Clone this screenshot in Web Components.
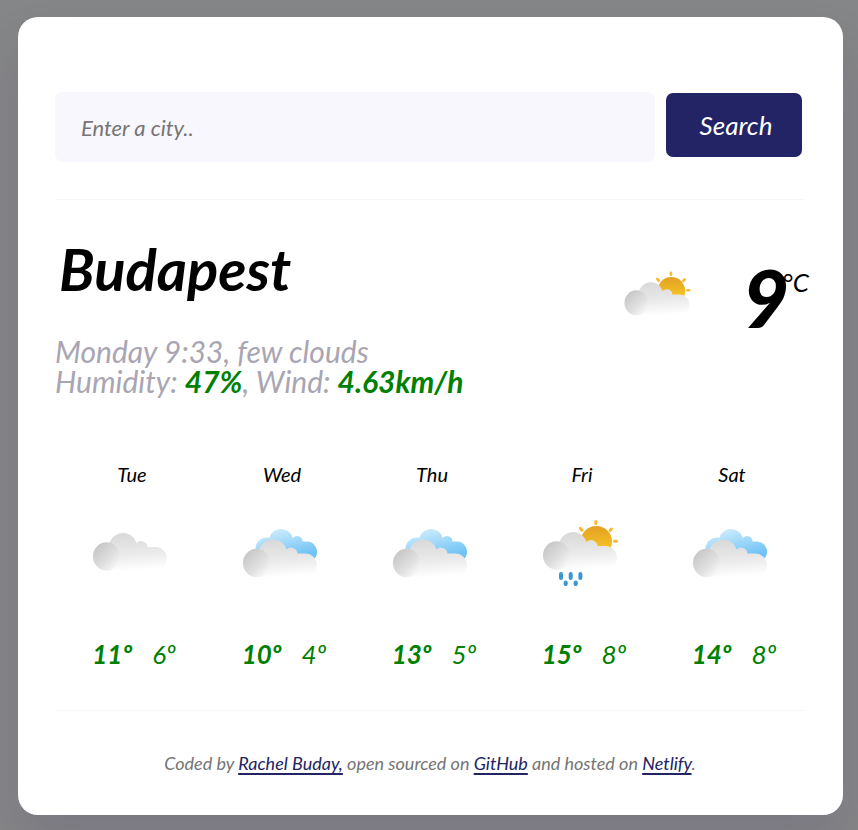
<!DOCTYPE html>
<html lang="en">
<head>
<meta charset="utf-8">
<meta name="viewport" content="width=device-width, initial-scale=1">
<title>Weather</title>
<style>
  html { background: #858687; }
  body {
    margin: 0;
    padding: 17px 15px 15px 18px;
    font-family: Lato, sans-serif;
    font-style: italic;
    color: #000;
    --navy: #232465;
    --line: #f7f7fb;
    --field: #f8f7fd;
    --muted: #a9a5b2;
    --green: #008000;
  }
</style>
</head>
<body>
<weather-card>
  <city-search slot="search" placeholder="Enter a city.."></city-search>
  <current-weather city="Budapest" temperature="9" icon="partly-sunny">
    <span slot="when">Monday 9:33, few clouds</span>
    <span slot="humidity">47%</span>
    <span slot="wind">4.63km/h</span>
  </current-weather>
  <forecast-list>
    <forecast-day day="Tue" icon="cloud" high="11" low="6"></forecast-day>
    <forecast-day day="Wed" icon="cloudy" high="10" low="4"></forecast-day>
    <forecast-day day="Thu" icon="cloudy" high="13" low="5"></forecast-day>
    <forecast-day day="Fri" icon="sun-rain" high="15" low="8"></forecast-day>
    <forecast-day day="Sat" icon="cloudy" high="14" low="8"></forecast-day>
  </forecast-list>
  <page-credits slot="footer">Coded by <a href="#author">Rachel Buday,</a> open sourced on <a href="#github">GitHub</a> and hosted on <a href="#netlify">Netlify</a>.</page-credits>
</weather-card>

<script>
class WeatherCard extends HTMLElement {
  constructor() {
    super();
    this.attachShadow({ mode: "open" }).innerHTML = `
      <style>
        :host {
          display: block; box-sizing: border-box; background: #fff;
          border-radius: 20px; padding: 75px 38px 38px 37px;
          box-shadow: 0 30px 50px rgba(65, 50, 100, .15);
        }
        header { padding-bottom: 37px; border-bottom: 1px solid var(--line); }
        main { padding-bottom: 40px; border-bottom: 1px solid var(--line); }
        footer { padding-top: 38px; }
      </style>
      <header><slot name="search"></slot></header>
      <main><slot></slot></main>
      <footer><slot name="footer"></slot></footer>`;
  }
}

class CitySearch extends HTMLElement {
  constructor() {
    super();
    this.attachShadow({ mode: "open" }).innerHTML = `
      <style>
        :host { display: block; }
        form { display: flex; align-items: flex-start; gap: 11px; margin: 0; padding-right: 3px; }
        input {
          flex: 1; min-width: 0; box-sizing: border-box; height: 70px;
          padding: 0 26px; border: 0; border-radius: 8px;
          background: var(--field); font: italic 22px/28px Lato, sans-serif;
        }
        input::placeholder { color: #757575; opacity: 1; }
        button {
          flex: 0 0 136px; height: 64px; margin-top: 1px; padding: 0 0 0 4px; border: 0;
          border-radius: 7px; background: var(--navy); color: #fff;
          font: italic 26px/32px Lato, sans-serif; cursor: pointer;
        }
      </style>
      <form onsubmit="return false">
        <input type="text" aria-label="City" autocomplete="off">
        <button type="submit">Search</button>
      </form>`;
    this.shadowRoot.querySelector("input").placeholder = this.getAttribute("placeholder");
  }
}

const CLOUD = `
  <path fill="url(#body)" d="M27 70.500V56L29 46.500A14 14 0 0 1 56.400 43A6.500 6.500 0 0 1 67.500 47H75.200A11.700 11.700 0 0 1 75.200 70.500Z"/>
  <ellipse cx="26.500" cy="56.500" rx="13.500" ry="14.200" fill="url(#puff)"/>`;
const SUN = `
  <circle cx="66.300" cy="41.700" r="15.700" fill="url(#sun)"/>
  <g stroke="#fab92d" stroke-width="3" stroke-linecap="round">
    <path d="M65.800 21.500V23.500M80 30.500L81.500 29M84.500 41.200H86.500M50.300 28.300L52 30.200"/>
  </g>`;
const ICONS = {
  "cloud": CLOUD,
  "cloudy": `
    <g fill="url(#sky)">
      <circle cx="37" cy="49" r="11.500"/><circle cx="51" cy="41" r="12"/>
      <circle cx="67" cy="41.500" r="5.500"/><path d="M40 41.500H77.500A10.300 10.300 0 0 1 84 59H40Z"/>
    </g>
    <g transform="translate(0 6.500)">${CLOUD}</g>`,
  "partly-sunny": `${SUN}<g transform="translate(0 -1)">${CLOUD}</g>`,
  "sun-rain": `${SUN}<g transform="translate(0 -1)">${CLOUD}</g>
    <g fill="#3b98cf">
      <rect x="29" y="72" width="4" height="8" rx="2"/><rect x="38.700" y="72" width="4" height="8" rx="2"/>
      <rect x="48.400" y="72" width="4" height="8" rx="2"/>
      <ellipse cx="35.700" cy="83.300" rx="2.100" ry="2.800"/><ellipse cx="45.700" cy="83.300" rx="2.100" ry="2.800"/>
    </g>`
};

class WeatherIcon extends HTMLElement {
  static observedAttributes = ["name"];
  constructor() { super(); this.attachShadow({ mode: "open" }); }
  attributeChangedCallback() {
    this.shadowRoot.innerHTML = `
      <style>:host { display: block; } svg { display: block; width: 100%; }</style>
      <svg viewBox="0 0 100 100" aria-hidden="true">
        <defs>
          <linearGradient id="body" gradientUnits="userSpaceOnUse" x1="45" y1="32" x2="48" y2="71">
            <stop stop-color="#d8d8d8"/><stop offset=".55" stop-color="#e9e9e9"/><stop offset="1" stop-color="#fff"/>
          </linearGradient>
          <linearGradient id="puff" x1=".1" y1=".15" x2=".8" y2=".95">
            <stop stop-color="#c6c6c6"/><stop offset=".65" stop-color="#e2e2e2"/><stop offset="1" stop-color="#f8f8f8"/>
          </linearGradient>
          <linearGradient id="sky" gradientUnits="userSpaceOnUse" x1="54" y1="29" x2="62" y2="59">
            <stop stop-color="#c6e9fd"/><stop offset="1" stop-color="#6ec2f5"/>
          </linearGradient>
          <linearGradient id="sun" x1="0" y1="0" x2="0" y2="1">
            <stop stop-color="#e2a021"/><stop offset=".8" stop-color="#f8c727"/>
          </linearGradient>
        </defs>${ICONS[this.getAttribute("name")] || ""}
      </svg>`;
  }
}

class CurrentWeather extends HTMLElement {
  constructor() {
    super();
    this.attachShadow({ mode: "open" }).innerHTML = `
      <style>
        :host { display: flex; justify-content: space-between; padding-top: 34px; }
        h1 { margin: 0 0 32px; padding-left: 4px; font-size: 58px; line-height: 70px; font-weight: 700; }
        p { margin: 0; font-size: 30px; line-height: 30px; color: var(--muted); }
        p:last-child { margin-bottom: 3px; }
        strong { font-weight: 700; color: var(--green); }
        .now { display: flex; align-items: flex-start; gap: 42px; padding-top: 20px; }
        weather-icon { width: 88px; }
        .temp { display: flex; align-items: flex-start; }
        .value { font-size: 80px; line-height: 86px; font-weight: 900; }
        .unit { margin: 8px -4px 0 -7px; font-size: 26px; line-height: 40px; }
      </style>
      <section>
        <h1></h1>
        <p><slot name="when"></slot></p>
        <p>Humidity: <strong><slot name="humidity"></slot></strong>, Wind: <strong><slot name="wind"></slot></strong></p>
      </section>
      <div class="now">
        <weather-icon></weather-icon>
        <div class="temp"><span class="value"></span><span class="unit">°C</span></div>
      </div>`;
    const $ = s => this.shadowRoot.querySelector(s);
    $("h1").textContent = this.getAttribute("city");
    $(".value").textContent = this.getAttribute("temperature");
    $("weather-icon").setAttribute("name", this.getAttribute("icon"));
  }
}

class ForecastList extends HTMLElement {
  constructor() {
    super();
    this.attachShadow({ mode: "open" }).innerHTML = `
      <style>:host { display: grid; grid-template-columns: repeat(5, 1fr); padding-top: 61px; }</style>
      <slot></slot>`;
  }
}

class ForecastDay extends HTMLElement {
  constructor() {
    super();
    this.attachShadow({ mode: "open" }).innerHTML = `
      <style>
        :host { display: flex; flex-direction: column; align-items: center; }
        .day { padding-left: 4px; font-size: 20px; line-height: 28px; }
        weather-icon { width: 100px; margin: 12px 0 38px; }
        .temps { display: flex; gap: 20px; padding-left: 8px; font-size: 26px; line-height: 32px; color: var(--green); }
        .high { font-weight: 700; }
      </style>
      <div class="day"></div>
      <weather-icon></weather-icon>
      <div class="temps"><span class="high"></span><span class="low"></span></div>`;
    const $ = s => this.shadowRoot.querySelector(s);
    $(".day").textContent = this.getAttribute("day");
    $("weather-icon").setAttribute("name", this.getAttribute("icon"));
    $(".high").textContent = this.getAttribute("high") + "º";
    $(".low").textContent = this.getAttribute("low") + "º";
  }
}

class PageCredits extends HTMLElement {
  constructor() {
    super();
    this.attachShadow({ mode: "open" }).innerHTML = `
      <style>
        :host { display: block; text-align: center; font-size: 18px; line-height: 28px; color: #757575; }
        ::slotted(a) { color: var(--navy); text-decoration: underline 2px; text-underline-offset: 3px; }
      </style>
      <slot></slot>`;
  }
}

customElements.define("weather-icon", WeatherIcon);
customElements.define("weather-card", WeatherCard);
customElements.define("city-search", CitySearch);
customElements.define("current-weather", CurrentWeather);
customElements.define("forecast-list", ForecastList);
customElements.define("forecast-day", ForecastDay);
customElements.define("page-credits", PageCredits);
</script>
</body>
</html>
